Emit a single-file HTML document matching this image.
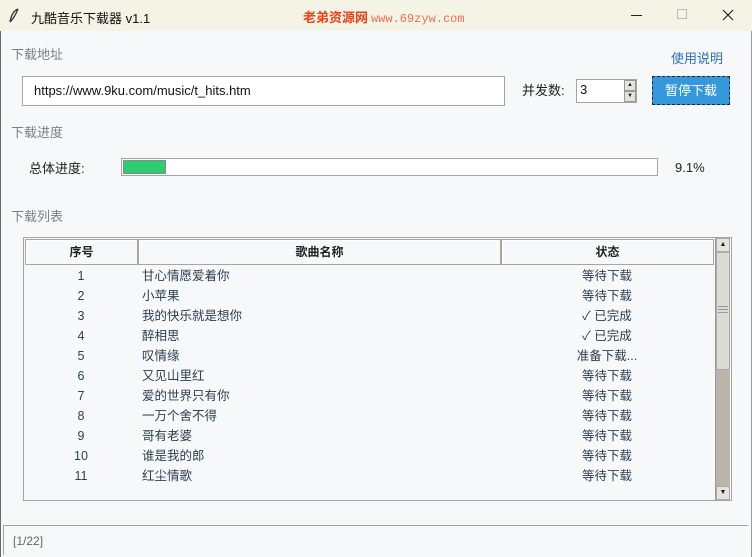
<!DOCTYPE html>
<html><head><meta charset="utf-8"><style>
*{margin:0;padding:0;box-sizing:border-box}
body{width:752px;height:557px;background:#f7f8fa;font-family:"Liberation Sans","Noto Sans CJK SC",sans-serif;font-size:13px;color:#222;position:relative;overflow:hidden}
.a{position:absolute;white-space:nowrap}
.lbl{color:#7a7f86;font-size:13px}
.row{position:absolute;left:25px;width:690px;height:20px;line-height:20px;color:#2c3e50;font-size:12.5px}
.row span{position:absolute}
</style></head><body>
<div class="a" style="left:0;top:0;width:752px;height:31px;background:#f3f3e6"></div>
<div class="a" style="left:0;top:31px;width:1px;height:526px;background:#6a6a6a"></div>
<div class="a" style="left:751px;top:31px;width:1px;height:526px;background:#9a9a9a"></div>
<svg class="a" style="left:8px;top:8px" width="12" height="16"><path d="M10 1 C5 3 3 8 2 14 M10 1 C8 6 6 10 2 14" stroke="#333" fill="none" stroke-width="1.3"/></svg>
<div class="a" style="left:31px;top:8px;font-size:13px;color:#111">九酷音乐下载器 v1.1</div>
<div class="a" style="left:303px;top:7px;font-size:13px;color:#f04010;font-family:'Noto Sans CJK SC',sans-serif;font-weight:bold">老弟资源网 <span style="font-family:'Liberation Mono',monospace;color:#f07050;font-size:12px;font-weight:normal">www.69zyw.com</span></div>
<div class="a" style="left:631px;top:15px;width:11px;height:1px;background:#222"></div>
<div class="a" style="left:677px;top:9px;width:10px;height:10px;border:1px solid #bbb"></div>
<svg class="a" style="left:722px;top:9px" width="12" height="12"><path d="M1 1L11 11M11 1L1 11" stroke="#222" stroke-width="1.2"/></svg>

<div class="a lbl" style="left:11px;top:44px">下载地址</div>
<div class="a" style="left:671px;top:48px;color:#2a6ebb;font-size:13px">使用说明</div>
<div class="a" style="left:22px;top:76px;width:483px;height:30px;border:1px solid #a8a49c;background:#fff"></div>
<div class="a" style="left:34px;top:83px;font-size:13px;color:#111">https://www.9ku.com/music/t_hits.htm</div>
<div class="a" style="left:522px;top:80px;color:#222">并发数:</div>
<div class="a" style="left:576px;top:79px;width:61px;height:24px;border:1px solid #a8a49c;background:#fff"></div>
<div class="a" style="left:580px;top:82px;color:#111">3</div>
<div class="a" style="left:624px;top:80px;width:12px;height:11px;background:#e6e3dd;border:1px solid #999;font-size:6px;text-align:center;line-height:9px">▲</div>
<div class="a" style="left:624px;top:91px;width:12px;height:11px;background:#e6e3dd;border:1px solid #999;font-size:6px;text-align:center;line-height:9px">▼</div>
<div class="a" style="left:652px;top:76px;width:78px;height:29px;background:#3498db;border:1px dashed #0d2840;color:#fff;text-align:center;line-height:27px;font-size:13px">暂停下载</div>

<div class="a lbl" style="left:11px;top:122px">下载进度</div>
<div class="a" style="left:29px;top:158px;color:#222">总体进度:</div>
<div class="a" style="left:121px;top:158px;width:537px;height:18px;border:1px solid #a8a49c;background:#fff"></div>
<div class="a" style="left:123px;top:160px;width:43px;height:14px;background:#2ecc71;border:1px solid #888"></div>
<div class="a" style="left:675px;top:160px;color:#222">9.1%</div>

<div class="a lbl" style="left:11px;top:206px">下载列表</div>
<div class="a" style="left:23px;top:237px;width:709px;height:264px;border:1px solid #a8a49c;background:#f7f8fa"></div>
<div class="a" style="left:25px;top:239px;width:113px;height:26px;border:1px solid #aaa49a;box-shadow:inset 1px 1px #fff;text-align:center;line-height:24px;font-size:12px;font-weight:bold;color:#222">序号</div>
<div class="a" style="left:138px;top:239px;width:363px;height:26px;border:1px solid #aaa49a;box-shadow:inset 1px 1px #fff;text-align:center;line-height:24px;font-size:12px;font-weight:bold;color:#222">歌曲名称</div>
<div class="a" style="left:501px;top:239px;width:213px;height:26px;border:1px solid #aaa49a;box-shadow:inset 1px 1px #fff;text-align:center;line-height:24px;font-size:12px;font-weight:bold;color:#222">状态</div>

<div class="a" style="left:715px;top:238px;width:15px;height:262px;background:#b9b5aa;border-left:1px solid #999"></div>
<div class="a" style="left:716px;top:238px;width:14px;height:14px;background:#e6e3dd;border:1px solid #aaa;font-size:7px;text-align:center;line-height:12px">▲</div>
<div class="a" style="left:716px;top:252px;width:14px;height:118px;background:#dcdad4;border:1px solid #aaa"></div>
<div class="a" style="left:718px;top:306px;width:10px;height:7px;border-top:1px solid #999;border-bottom:1px solid #999"></div>
<div class="a" style="left:718px;top:309px;width:10px;height:1px;background:#999"></div>
<div class="a" style="left:716px;top:486px;width:14px;height:14px;background:#e6e3dd;border:1px solid #aaa;font-size:7px;text-align:center;line-height:12px">▼</div>

<div class="row" style="top:266px"><span style="left:0;width:112px;text-align:center">1</span><span style="left:117px">甘心情愿爱着你</span><span style="left:476px;width:212px;text-align:center">等待下载</span></div>
<div class="row" style="top:286px"><span style="left:0;width:112px;text-align:center">2</span><span style="left:117px">小苹果</span><span style="left:476px;width:212px;text-align:center">等待下载</span></div>
<div class="row" style="top:306px"><span style="left:0;width:112px;text-align:center">3</span><span style="left:117px">我的快乐就是想你</span><span style="left:476px;width:212px;text-align:center">✓ 已完成</span></div>
<div class="row" style="top:326px"><span style="left:0;width:112px;text-align:center">4</span><span style="left:117px">醉相思</span><span style="left:476px;width:212px;text-align:center">✓ 已完成</span></div>
<div class="row" style="top:346px"><span style="left:0;width:112px;text-align:center">5</span><span style="left:117px">叹情缘</span><span style="left:476px;width:212px;text-align:center">准备下载...</span></div>
<div class="row" style="top:366px"><span style="left:0;width:112px;text-align:center">6</span><span style="left:117px">又见山里红</span><span style="left:476px;width:212px;text-align:center">等待下载</span></div>
<div class="row" style="top:386px"><span style="left:0;width:112px;text-align:center">7</span><span style="left:117px">爱的世界只有你</span><span style="left:476px;width:212px;text-align:center">等待下载</span></div>
<div class="row" style="top:406px"><span style="left:0;width:112px;text-align:center">8</span><span style="left:117px">一万个舍不得</span><span style="left:476px;width:212px;text-align:center">等待下载</span></div>
<div class="row" style="top:426px"><span style="left:0;width:112px;text-align:center">9</span><span style="left:117px">哥有老婆</span><span style="left:476px;width:212px;text-align:center">等待下载</span></div>
<div class="row" style="top:446px"><span style="left:0;width:112px;text-align:center">10</span><span style="left:117px">谁是我的郎</span><span style="left:476px;width:212px;text-align:center">等待下载</span></div>
<div class="row" style="top:466px"><span style="left:0;width:112px;text-align:center">11</span><span style="left:117px">红尘情歌</span><span style="left:476px;width:212px;text-align:center">等待下载</span></div>

<div class="a" style="left:3px;top:525px;width:746px;height:30px;border:1px solid #a8a49c;border-right-color:#fff;border-bottom:none;background:#f7f8fa"></div>
<div class="a" style="left:13px;top:534px;color:#666;font-size:12px">[1/22]</div>
</body></html>
